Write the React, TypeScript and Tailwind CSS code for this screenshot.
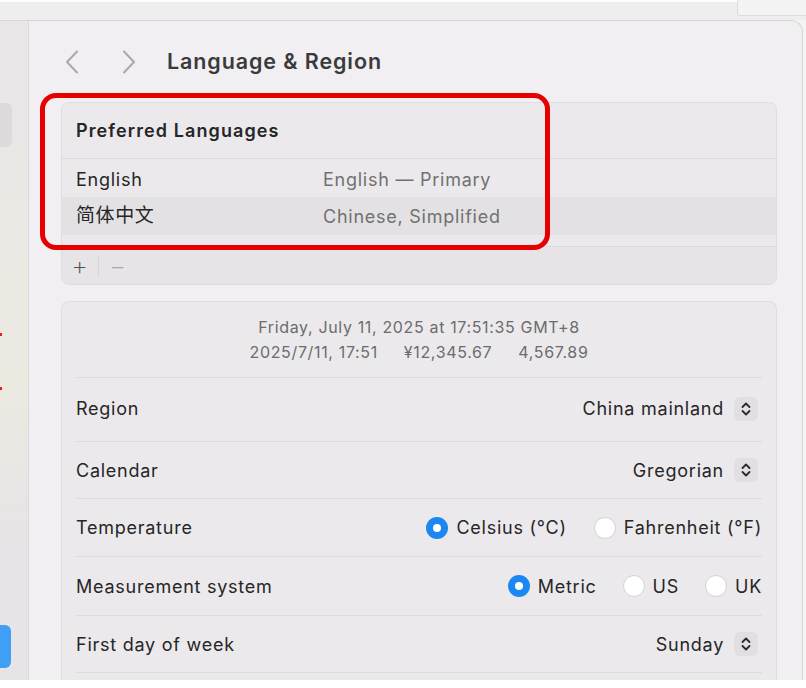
import React from 'react';

const Chevron: React.FC<{ dir: 'left' | 'right' }> = ({ dir }) => (
  <svg width="16" height="24" viewBox="0 0 16 24" fill="none">
    <path
      d={dir === 'left' ? 'M13 1.5 L3 12 L13 22.5' : 'M3 1.5 L13 12 L3 22.5'}
      stroke="#a9a9ab"
      strokeWidth="2"
      strokeLinecap="round"
      strokeLinejoin="round"
    />
  </svg>
);

const Stepper: React.FC = () => (
  <div className="w-[24px] h-[24px] rounded-[6px] bg-[#e1dfe2] flex items-center justify-center mr-[4px]">
    <svg width="10" height="16" viewBox="0 0 10 16" fill="none">
      <path d="M1.5 6 L5 2.5 L8.5 6" stroke="#2a2a2a" strokeWidth="1.8" strokeLinecap="round" strokeLinejoin="round" />
      <path d="M1.5 10 L5 13.5 L8.5 10" stroke="#2a2a2a" strokeWidth="1.8" strokeLinecap="round" strokeLinejoin="round" />
    </svg>
  </div>
);

const Radio: React.FC<{ label: string; checked?: boolean }> = ({ label, checked }) => (
  <div className="flex items-center gap-[8px]">
    {checked ? (
      <span className="w-[22px] h-[22px] rounded-full bg-[#1b87f2] flex items-center justify-center">
        <span className="w-[8px] h-[8px] rounded-full bg-white" />
      </span>
    ) : (
      <span className="w-[22px] h-[22px] rounded-full bg-white border border-[#d4d2d5]" />
    )}
    <span>{label}</span>
  </div>
);

const Row: React.FC<{ label: string; h: string; children: React.ReactNode }> = ({ label, h, children }) => (
  <div className={`flex items-center justify-between border-b border-[#dddbde] ${h}`}>
    <span>{label}</span>
    <div className="flex items-center">{children}</div>
  </div>
);

export default function App() {
  return (
    <div className="w-[806px] h-[688px] bg-white overflow-hidden font-['Inter','Noto_Sans_CJK_SC',sans-serif] text-[#262626]">
      <div className="relative h-[680px] bg-[#f4f4f4] flex flex-col">
        {/* window behind */}
        <div className="h-[20px] shrink-0 border-t-2 border-white bg-[#eeeeee] relative">
          <div className="absolute right-0 top-[-2px] w-[69px] h-[16px] bg-[#f3f3f3] border-l border-b border-[#dcdcdc] rounded-bl-[3px]" />
        </div>

        {/* main window */}
        <div className="flex-1 flex mr-[3px] border-t border-r border-[#d6d6d6] rounded-tr-[12px] bg-[#f1eff2] overflow-hidden">
          {/* sidebar */}
          <div className="w-[29px] shrink-0 border-r border-[#dcdadc] bg-[linear-gradient(180deg,#e8e6e8_0%,#ebe9e3_35%,#ece9e1_55%,#e6e4e6_80%,#e6e4e6_100%)] flex flex-col">
            <div className="mt-[82px] w-[12px] h-[44px] rounded-r-[6px] bg-[#dcdadd]" />
            <div className="mt-[186px] w-[2px] h-[3px] bg-[#e02020]" />
            <div className="mt-[51px] w-[2px] h-[3px] bg-[#e02020]" />
            <div className="mt-[235px] w-[11px] h-[43px] rounded-r-[6px] bg-[#3f9ff5]" />
          </div>

          {/* content */}
          <div className="flex-1 flex flex-col">
            <div className="h-[81px] shrink-0 flex items-center pl-[35px]">
              <Chevron dir="left" />
              <div className="w-[41px]" />
              <Chevron dir="right" />
              <h1 className="ml-[30px] text-[21.5px] font-semibold text-[#3a3a3c] tracking-[0.9px]">Language &amp; Region</h1>
            </div>

            {/* Preferred languages */}
            <div className="ml-[32px] w-[716px] rounded-[8px] border border-[#dfdde0] bg-[#ebe9ec] overflow-hidden text-[18px] tracking-[0.75px]">
              <div className="h-[56px] flex items-center px-[14px] border-b border-[#dddbde] font-semibold tracking-[1.1px]">
                Preferred Languages
              </div>
              <div className="h-[38px] flex items-center px-[14px] pt-[2px]">
                <span className="w-[247px]">English</span>
                <span className="text-[#717171]">English — Primary</span>
              </div>
              <div className="h-[38px] flex items-center px-[14px] bg-[#e3e1e4]">
                <span className="w-[247px] text-[19px] tracking-[0.6px]">简体中文</span>
                <span className="text-[#717171]">Chinese, Simplified</span>
              </div>
              <div className="h-[12px] border-b border-[#dddbde]" />
              <div className="h-[37px] flex items-center bg-[#e6e4e7] text-[#505050]">
                <span className="w-[36px] text-center text-[26px] leading-none font-extralight">+</span>
                <span className="w-px h-[22px] bg-[#d6d4d7]" />
                <span className="w-[38px] text-center text-[26px] leading-none font-extralight text-[#a8a6a9]">−</span>
              </div>
            </div>

            {/* Region settings */}
            <div className="ml-[32px] mt-[16px] w-[716px] flex-1 rounded-t-[8px] border border-b-0 border-[#dfdde0] bg-[#ebe9ec] px-[14px] text-[18px] tracking-[0.75px]">
              <div className="h-[76px] pt-[13px] border-b border-[#dddbde] text-center text-[16px] leading-[25px] tracking-[0.65px] text-[#6c6c6c]">
                <div>Friday, July 11, 2025 at 17:51:35 GMT+8</div>
                <div className="flex justify-center gap-[26px]">
                  <span>2025/7/11, 17:51</span>
                  <span>¥12,345.67</span>
                  <span>4,567.89</span>
                </div>
              </div>
              <Row label="Region" h="h-[64px] pb-[2px]">
                <span className="mr-[10px]">China mainland</span>
                <Stepper />
              </Row>
              <Row label="Calendar" h="h-[57px]">
                <span className="mr-[10px]">Gregorian</span>
                <Stepper />
              </Row>
              <Row label="Temperature" h="h-[58px]">
                <div className="flex items-center gap-[27px]">
                  <Radio label="Celsius (°C)" checked />
                  <Radio label="Fahrenheit (°F)" />
                </div>
              </Row>
              <Row label="Measurement system" h="h-[59px]">
                <div className="flex items-center gap-[26px]">
                  <Radio label="Metric" checked />
                  <Radio label="US" />
                  <Radio label="UK" />
                </div>
              </Row>
              <Row label="First day of week" h="h-[57px]">
                <span className="mr-[10px]">Sunday</span>
                <Stepper />
              </Row>
            </div>
          </div>
        </div>

        {/* annotation */}
        <div className="absolute left-[40px] top-[93px] w-[510px] h-[157px] rounded-[16px] border-[5px] border-[#e60000] pointer-events-none" />
      </div>
    </div>
  );
}
